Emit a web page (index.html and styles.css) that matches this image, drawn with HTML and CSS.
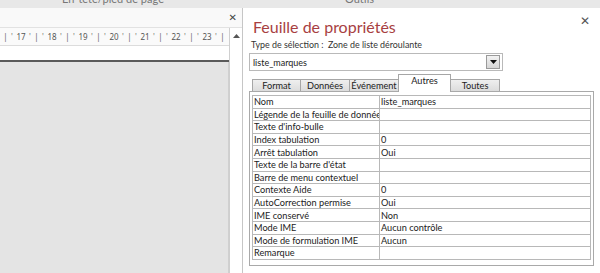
FILE: index.html
```html
<!DOCTYPE html>
<html lang="fr">
<head>
  <meta charset="UTF-8">
  <title>Feuille de propriétés</title>
  <link rel="stylesheet" href="styles.css">
</head>
<body>
  <div class="topbar">
    <span class="tb-left">En-tête/pied de page</span>
    <span class="tb-right">Outils</span>
  </div>

  <div class="main">
    <div class="design">
      <div class="design-head">
        <span class="close">&#x2715;</span>
      </div>
      <div class="design-body">
        <div class="canvas">
          <div class="ruler">
            <span class="tk">|</span><span class="tq">'</span><span class="num">17</span><span class="tq">'</span>
            <span class="tk">|</span><span class="tq">'</span><span class="num">18</span><span class="tq">'</span>
            <span class="tk">|</span><span class="tq">'</span><span class="num">19</span><span class="tq">'</span>
            <span class="tk">|</span><span class="tq">'</span><span class="num">20</span><span class="tq">'</span>
            <span class="tk">|</span><span class="tq">'</span><span class="num">21</span><span class="tq">'</span>
            <span class="tk">|</span><span class="tq">'</span><span class="num">22</span><span class="tq">'</span>
            <span class="tk">|</span><span class="tq">'</span><span class="num">23</span><span class="tq">'</span>
            <span class="tk">|</span>
          </div>
          <div class="section-white"></div>
          <div class="section-bar"></div>
          <div class="section-gray"></div>
        </div>
        <div class="vscroll">
          <svg class="arrow-up" width="7" height="4" viewBox="0 0 7 4"><path d="M0 4 L3.5 0 L7 4 Z" fill="#555"/></svg>
        </div>
      </div>
    </div>

    <div class="separator"></div>

    <div class="props">
      <div class="props-head">
        <div class="title">Feuille de propriétés</div>
        <span class="close close-props">&#x2715;</span>
      </div>
      <div class="selection">Type de sélection :&nbsp; Zone de liste déroulante</div>

      <div class="combo">
        <span class="combo-text">liste_marques</span>
        <span class="combo-btn">
          <svg width="7" height="4" viewBox="0 0 7 4"><path d="M0 0 L7 0 L3.5 4 Z" fill="#111"/></svg>
        </span>
      </div>

      <div class="tabs">
        <div class="tab">Format</div>
        <div class="tab">Données</div>
        <div class="tab">Événement</div>
        <div class="tab active">Autres</div>
        <div class="tab">Toutes</div>
      </div>

      <div class="sheet">
        <table class="grid">
          <tr><td class="lbl">Nom</td><td class="val">liste_marques</td></tr>
          <tr><td class="lbl">Légende de la feuille de données</td><td class="val"></td></tr>
          <tr><td class="lbl">Texte d'info-bulle</td><td class="val"></td></tr>
          <tr><td class="lbl">Index tabulation</td><td class="val">0</td></tr>
          <tr><td class="lbl">Arrêt tabulation</td><td class="val">Oui</td></tr>
          <tr><td class="lbl">Texte de la barre d'état</td><td class="val"></td></tr>
          <tr><td class="lbl">Barre de menu contextuel</td><td class="val"></td></tr>
          <tr><td class="lbl">Contexte Aide</td><td class="val">0</td></tr>
          <tr><td class="lbl">AutoCorrection permise</td><td class="val">Oui</td></tr>
          <tr><td class="lbl">IME conservé</td><td class="val">Non</td></tr>
          <tr><td class="lbl">Mode IME</td><td class="val">Aucun contrôle</td></tr>
          <tr><td class="lbl">Mode de formulation IME</td><td class="val">Aucun</td></tr>
          <tr><td class="lbl">Remarque</td><td class="val"></td></tr>
        </table>
      </div>
    </div>
  </div>
</body>
</html>
```

FILE: styles.css
```css
body {
  margin: 0;
  width: 600px;
  height: 273px;
  overflow: hidden;
  font-family: Lato, "Noto Sans", sans-serif;
  color: #222;
  background: #fff;
}

/* bande du ruban, coupée en haut */
.topbar {
  height: 8px;
  background: #e8e8e8;
  overflow: hidden;
  position: relative;
  font-size: 11px;
  color: #777;
}
.tb-left {
  position: absolute;
  left: 62px;
  top: -8px;
}
.tb-right {
  position: absolute;
  left: 345px;
  top: -8px;
}

.main {
  display: flex;
  height: 265px;
}

/* zone de création (gauche) */
.design {
  width: 242px;
  display: flex;
  flex-direction: column;
  background: #f7f7f7;
}
.design-head {
  height: 19px;
  display: flex;
  justify-content: flex-end;
  align-items: center;
  padding-right: 5px;
  border-bottom: 1px solid #e2e2e2;
  background: #f9f9f9;
}
.close {
  font-family: "DejaVu Sans", sans-serif;
  font-size: 10px;
  color: #444;
  line-height: 1;
}
.design-body {
  flex: 1;
  display: flex;
}
.canvas {
  flex: 1;
  display: flex;
  flex-direction: column;
}
.ruler {
  height: 17px;
  display: flex;
  align-items: center;
  padding-left: 3px;
  font-family: "Noto Sans", sans-serif;
  font-size: 8px;
  color: #555;
  background: #fafafa;
  border-bottom: 1px solid #dcdcdc;
  white-space: nowrap;
  overflow: hidden;
}
.ruler span {
  display: inline-block;
  text-align: center;
}
.ruler .tk { width: 5px; color: #666; }
.ruler .tq { width: 8px; color: #777; }
.ruler .num { width: 10px; }
.section-white {
  height: 14px;
  background: #fff;
}
.section-bar {
  height: 2px;
  background: #5a5a5a;
}
.section-gray {
  flex: 1;
  background: #e4e4e4;
  border-right: 1px solid #d0d0d0;
}
.vscroll {
  width: 12px;
  background: #fff;
  border-left: 1px solid #cfcfcf;
  display: flex;
  justify-content: center;
  padding-top: 6px;
}
.arrow-up { display: block; }

.separator {
  width: 1px;
  background: #c6c6c6;
}

/* feuille de propriétés (droite) */
.props {
  flex: 1;
  padding: 0 6px;
  background: #fff;
}
.props-head {
  display: flex;
  justify-content: space-between;
  align-items: flex-start;
  height: 28px;
}
.title {
  margin: 8px 0 0 4px;
  font-family: Lato, sans-serif;
  font-weight: 400;
  font-size: 16px;
  line-height: 22px;
  color: #a83f42;
}
.close-props {
  font-size: 12px;
  margin: 7px 4px 0 0;
  color: #555;
}
.selection {
  font-size: 8.9px;
  line-height: 14px;
  margin: 2px 0 0 2px;
  color: #333;
}
.combo {
  width: 252px;
  height: 16px;
  margin-top: 1px;
  border: 1px solid #b9b9b9;
  display: flex;
  align-items: center;
  justify-content: space-between;
  font-size: 9px;
}
.combo-text { padding-left: 3px; }
.combo-btn {
  width: 12px;
  height: 12px;
  margin-right: 2px;
  border: 1px solid #9a9a9a;
  background: linear-gradient(#f2f2f2, #d6d6d6);
  display: flex;
  align-items: center;
  justify-content: center;
}
.combo-btn svg { display: block; }

.tabs {
  display: flex;
  align-items: flex-end;
  height: 18px;
  margin: 2px 0 0 3px;
  position: relative;
  z-index: 1;
}
.tab {
  box-sizing: border-box;
  width: 50px;
  height: 12px;
  border: 1px solid #a6a6a6;
  border-bottom: none;
  background: linear-gradient(#efefef, #dcdcdc);
  font-size: 9.2px;
  line-height: 11px;
  text-align: center;
  margin-left: -1px;
  color: #222;
}
.tab:first-child { margin-left: 0; width: 49px; }
.tab.active {
  width: 53px;
  height: 18px;
  background: #fff;
  line-height: 12px;
  margin-bottom: -1px;
}
.sheet {
  height: 170px;
  border: 1px solid #a9a9a9;
  padding: 3px 2px 0 2px;
}
.grid {
  width: 100%;
  border-collapse: collapse;
  table-layout: fixed;
  font-size: 9.2px;
}
.grid td {
  height: 11.6px;
  padding: 0 1px;
  border: 1px solid #b8b8b8;
  line-height: 11px;
  white-space: nowrap;
  overflow: hidden;
}
.grid .lbl { width: 124px; }
```
